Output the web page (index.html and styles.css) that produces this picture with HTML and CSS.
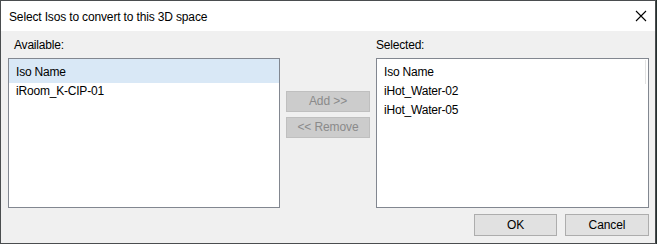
FILE: index.html
```html
<!DOCTYPE html>
<html>
<head>
<meta charset="utf-8">
<link rel="stylesheet" href="styles.css">
</head>
<body>
<div class="window">
  <div class="titlebar">
    <span class="title">Select Isos to convert to this 3D space</span>
    <svg class="close" width="12" height="12" viewBox="0 0 12 12"><path d="M1 1L11 11M11 1L1 11" stroke="#000" stroke-width="1.1" fill="none"/></svg>
  </div>
  <div class="content">
    <div class="panes">
      <div class="col">
        <div class="label label-left">Available:</div>
        <div class="list">
          <div class="list-header selected-header">Iso Name</div>
          <div class="item">iRoom_K-CIP-01</div>
        </div>
      </div>
      <div class="middle">
        <button class="btn disabled">Add &gt;&gt;</button>
        <button class="btn disabled">&lt;&lt; Remove</button>
      </div>
      <div class="col col-right">
        <div class="label">Selected:</div>
        <div class="list">
          <div class="list-header">Iso Name<span class="divider"></span></div>
          <div class="item">iHot_Water-02</div>
          <div class="item">iHot_Water-05</div>
        </div>
      </div>
    </div>
    <div class="footer">
      <button class="btn action">OK</button>
      <button class="btn action cancel">Cancel</button>
    </div>
  </div>
</div>
</body>
</html>
```

FILE: styles.css
```css
html, body {
  margin: 0;
  padding: 0;
}
body {
  background: #26302f;
  width: 657px;
  height: 244px;
  font-family: "Liberation Sans", Arial, sans-serif;
  font-size: 12px;
  letter-spacing: -0.2px;
  color: #000;
}
.window {
  width: 654px;
  height: 242px;
  border: 1px solid #4a4d4f;
  background: #f0f0f0;
  display: flex;
  flex-direction: column;
}
.titlebar {
  height: 30px;
  background: #fff;
  display: flex;
  align-items: center;
  justify-content: space-between;
  padding: 0 8px 0 8px;
}
.title {
  line-height: 30px;
  padding-top: 1px;
  letter-spacing: -0.15px;
}
.close {
  margin-right: 0;
}
.content {
  padding: 6px 6px 0 7px;
  display: flex;
  flex-direction: column;
}
.panes {
  display: flex;
  gap: 6px;
}
.col {
  width: 272px;
  display: flex;
  flex-direction: column;
}
.col-right {
  width: 273px;
}
.label {
  line-height: 15px;
  height: 15px;
  padding-top: 1px;
  margin-bottom: 5px;
}
.label-left {
  padding-left: 6px;
}
.list {
  height: 148px;
  border: 1px solid #828790;
  background: #fff;
  display: flex;
  flex-direction: column;
}
.list-header {
  position: relative;
  height: 22px;
  line-height: 22px;
  padding: 2px 0 0 7px;
}
.selected-header {
  background: #d9e8f6;
}
.divider {
  position: absolute;
  right: 2px;
  top: 1px;
  width: 1px;
  height: 24px;
  background: #e3e3e3;
}
.item {
  height: 19px;
  line-height: 16px;
  padding-left: 7px;
}
.middle {
  width: 84px;
  padding-top: 54px;
  display: flex;
  flex-direction: column;
  gap: 5px;
}
.btn {
  font-family: "Liberation Sans", Arial, sans-serif;
  font-size: 12px;
  letter-spacing: -0.1px;
  margin: 0;
  padding: 0;
  box-sizing: border-box;
  width: 84px;
  height: 21px;
  line-height: 19px;
}
.disabled {
  background: #cccccc;
  border: 1px solid #bfbfbf;
  color: #8a8a8a;
}
.footer {
  display: flex;
  justify-content: flex-end;
  gap: 8px;
  margin-top: 6px;
}
.action {
  width: 83px;
  height: 22px;
  line-height: 20px;
  background: #e1e1e1;
  border: 1px solid #adadad;
  color: #000;
}
.cancel {
  width: 84px;
}
```
